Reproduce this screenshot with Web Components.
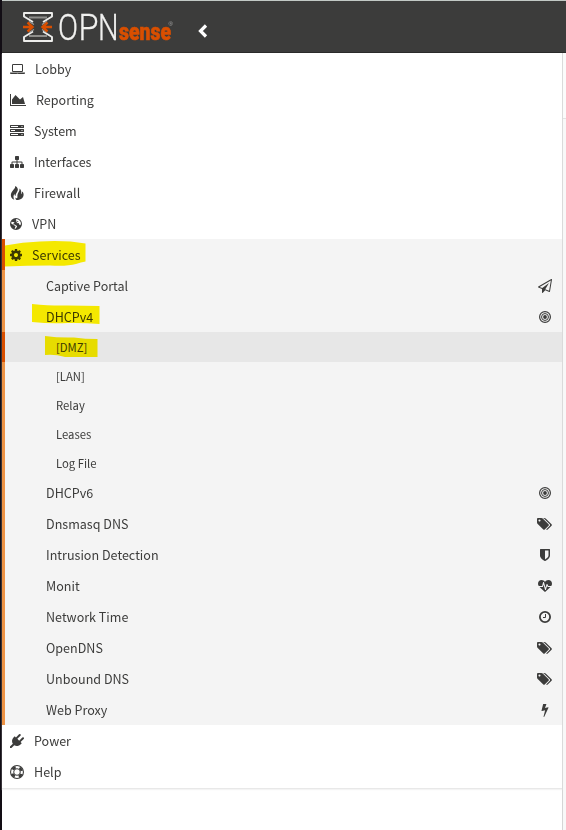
<!DOCTYPE html>
<html lang="en"><head><meta charset="utf-8"><title>OPNsense</title>
<style>
html,body{margin:0;height:100%;overflow:hidden}
body{background:#fff;font-family:"Noto Sans CJK SC","Noto Sans",sans-serif;color:#3c3c3b}
</style></head><body>
<opn-app></opn-app>
<script>
const P=(w,d)=>`<svg viewBox="0 0 ${w} 1792"><path d="${d}"/></svg>`;
const ICONS={
laptop:P(1920,"M416 1280q-66 0-113-47t-47-113v-704q0-66 47-113t113-47h1088q66 0 113 47t47 113v704q0 66-47 113t-113 47h-1088zm-32-864v704q0 13 9.500 22.500t22.500 9.500h1088q13 0 22.500-9.500t9.500-22.500v-704q0-13-9.500-22.500t-22.500-9.500h-1088q-13 0-22.500 9.500t-9.500 22.500zm1376 928h160v96q0 40-47 68t-113 28h-1600q-66 0-113-28t-47-68v-96h1760zm-720 96q16 0 16-16t-16-16h-160q-16 0-16 16t16 16h160z"),
chart:P(2048,"M2048 1536v128h-2048v-1536h128v1408h1920zM1664 512l256 896h-1664v-576l448-576 576 576z"),
server:`<svg viewBox="0 0 14 14"><path fill-rule="evenodd" d="M.5 1h13q.5 0 .5.5v2q0 .5-.5.5H.5Q0 4 0 3.500v-2Q0 1 .5 1zM1 2v1h7V2zM11.500 2v1h1V2zM.5 5h13q.5 0 .5.5v2q0 .5-.5.5H.5Q0 8 0 7.500v-2Q0 5 .5 5zM1 6v1h4V6zM11.500 6v1h1V6zM.5 9h13q.5 0 .5.500v2q0 .5-.5.5H.5Q0 12 0 11.500v-2Q0 9 .5 9zM1 10v1h7v-1zM11.500 10v1h1v-1z"/></svg>`,
sitemap:P(1792,"M1792 1248v320q0 40-28 68t-68 28h-320q-40 0-68-28t-28-68v-320q0-40 28-68t68-28h96v-192h-512v192h96q40 0 68 28t28 68v320q0 40-28 68t-68 28h-320q-40 0-68-28t-28-68v-320q0-40 28-68t68-28h96v-192h-512v192h96q40 0 68 28t28 68v320q0 40-28 68t-68 28h-320q-40 0-68-28t-28-68v-320q0-40 28-68t68-28h96v-192q0-52 38-90t90-38h512v-192h-96q-40 0-68-28t-28-68v-320q0-40 28-68t68-28h320q40 0 68 28t28 68v320q0 40-28 68t-68 28h-96v192h512q52 0 90 38t38 90v192h96q40 0 68 28t28 68z"),
fire:`<svg viewBox="0 0 14 14"><path d="M5 0C6 2.400 2.200 4.200 1.200 7.200.2 9.900 1.500 12.700 4.300 13.800 3.200 11.600 3.200 9.600 4.500 7.800c0 1.400.4 2 1 2.300C5.400 7 8.300 5.500 7.800 2.900 7.400 1.500 6.500.5 5 0zM9.400 2.400c.8 2.600-2 4.300-2 7.200 0 1.200.2 1.800-.2 2.400-.5.5-1.300.2-1.600-.6-.3 1.100.1 2 .9 2.600C10.400 14 13.500 12 13.600 8.700c.1-1.600-.6-2.700-1.700-3.300.3 1.200.1 2.100-.7 2.900.3-2.400.1-4.800-1.800-5.900z"/></svg>`,
globe:`<svg viewBox="0 0 12 12"><path fill-rule="evenodd" d="M6 0a6 6 0 1 1 0 12A6 6 0 0 1 6 0zM6.800 1.100 5.700 1.800l.8.5-.7.9 1 .5 1-.8.7.3-.8.8-1 .4.1.8 1.300-.3.7.4.4 1.200.8.600.7-.7.200.4A5 5 0 0 0 6.800 1.100zM1.500 3.800 1.200 5.200l.9 1.100 1.200.2.6.8 1.100.4.6.8-.6 1-.3 1.200.5.3 1.300-1.500.6-1-.3-.8-1.200-.4-.8-.8-1 .1-.6-.7.8-.8.500-.8z"/></svg>`,
gear:`<svg viewBox="128 128 1536 1536"><path d="M1152 896q0-106-75-181t-181-75-181 75-75 181 75 181 181 75 181-75 75-181zm512-109v222q0 12-8 23t-20 13l-185 28q-19 54-39 91 35 50 107 138 10 12 10 25t-9 23q-27 37-99 108t-94 71q-12 0-26-9l-138-108q-44 23-91 38-16 136-29 186-7 28-36 28h-222q-14 0-24.500-8.500t-11.500-21.500l-28-184q-49-16-90-37l-141 107q-10 9-25 9-14 0-25-11-126-114-165-168-7-10-7-23 0-12 8-23 15-21 51-66.500t54-70.500q-27-50-41-99l-183-27q-13-2-21-12.500t-8-23.500v-222q0-12 8-23t19-13l186-28q14-46 39-92-40-57-107-138-10-12-10-24 0-10 9-23 26-36 98.500-107.500t94.500-71.500q13 0 26 10l138 107q44-23 91-38 16-136 29-186 7-28 36-28h222q14 0 24.500 8.500t11.500 21.500l28 184q49 16 90 37l142-107q9-9 24-9 13 0 25 10 129 119 165 170 7 8 7 22 0 12-8 23-15 21-51 66.500t-54 70.500q26 50 41 98l183 28q13 2 21 12.500t8 23.500z"/></svg>`,
plane:P(1792,"M1764 11q33 24 27 64l-256 1536q-5 29-32 45-14 8-31 8-11 0-24-5l-527-215-298 327q-18 21-47 21-14 0-23-4-19-7-30-23.500t-11-36.500v-452l-472-193q-37-14-40-55-3-39 32-59l1664-960q35-21 68 2zm-342 1499l221-1323-1434 827 336 137 863-639-478 797z"),
bullseye:`<svg viewBox="0 0 12 12"><circle cx="6" cy="6" r="1.900"/><g fill="none" stroke="currentColor"><circle cx="6" cy="6" r="3.450" stroke-width="1"/><circle cx="6" cy="6" r="5.400" stroke-width="1.200"/></g></svg>`,
tags:`<svg viewBox="128 0 2048 1792"><path d="M576 448q0-53-37.500-90.500t-90.500-37.500-90.500 37.500-37.500 90.500 37.500 90.500 90.500 37.500 90.500-37.500 37.500-90.500zm1067 576q0 53-37 90l-491 492q-39 37-91 37-53 0-90-37l-715-716q-38-37-64.500-101t-26.500-117v-416q0-52 38-90t90-38h416q53 0 117 26.500t102 64.500l715 714q37 39 37 91zm384 0q0 53-37 90l-491 492q-39 37-91 37-36 0-59-14t-53-45l470-470q37-37 37-90 0-52-37-91l-715-714q-38-38-102-64.500t-117-26.500h224q53 0 117 26.500t102 64.500l715 714q37 39 37 91z"/></svg>`,
shield:P(1792,"M1344 960v-640h-448v1137q119-63 213-137 235-184 235-360zm192-768v768q0 86-33.500 170.500t-83 150-118 127.500-126.500 103-121 77.500-89.500 49.500-42.500 20q-12 6-26 6t-26-6q-16-7-42.500-20t-89.500-49.500-121-77.500-126.500-103-118-127.500-83-150-33.500-170.500v-768q0-26 19-45t45-19h1152q26 0 45 19t19 45z"),
heart:P(1792,"M1280 896h305q-5 6-10 10.500t-9 7.500l-3 4-623 600q-18 18-44 18t-44-18l-624-602q-5-2-21-20h369q22 0 39.500-13.500t22.500-34.500l70-281 190 667q6 20 23 33t39 13q21 0 38-13t23-33l146-485 56 112q18 35 57 35zm512-428q0 145-103 300h-369l-111-221q-8-17-25.500-27t-36.500-8q-45 5-56 46l-129 430-196-686q-6-20-23.500-33t-39.500-13-39 13.500-22 34.500l-116 464h-423q-103-155-103-300 0-220 127-344t351-124q62 0 126.500 21.500t120 58 95.500 68.500 76 68q36-36 76-68t95.500-68.500 120-58 126.500-21.500q224 0 351 124t127 344z").replace('0 0 1792','0 -128 1792'),
clock:`<svg viewBox="0 0 12 12" fill="none" stroke="currentColor"><circle cx="6" cy="6" r="5.100" stroke-width="1.800"/><path d="M6.500 3v3.500H4" stroke-width="1"/></svg>`,
bolt:P(1792,"M1333 566q18 20 7 44l-540 1157q-13 25-42 25-4 0-14-2-17-5-25.500-19t-4.500-30l197-808-406 101q-4 1-12 1-18 0-31-11-18-15-13-39l201-825q4-14 16-23t28-9h328q19 0 32 12.500t13 29.500q0 8-5 18l-171 463 396-98q8-2 12-2 19 0 34 15z"),
plug:P(1792,"M1755 453q37 38 37 90.500t-37 90.500l-401 400 150 150-160 160q-163 163-389.500 186.500t-411.500-100.500l-362 362h-181v-181l362-362q-124-185-100.500-411.500t186.500-389.500l160-160 150 150 400-401q38-37 91-37t90 37 37 90.500-37 90.500l-400 401 234 234 401-400q38-37 91-37t90 37z"),
ring:`<svg viewBox="0 0 14 14" fill="none" stroke="currentColor"><circle cx="7" cy="7" r="6.450" stroke-width="1.100"/><circle cx="7" cy="7" r="3.300" stroke-width="1"/><circle cx="7" cy="7" r="4.900" stroke-width="2.600" stroke-dasharray="3.700 3.997" stroke-dashoffset="-2"/></svg>`
};
const define=(name,html)=>{
  const t=document.createElement('template');t.innerHTML=html;
  customElements.define(name,class extends HTMLElement{
    constructor(){super();this.attachShadow({mode:'open'}).append(t.content.cloneNode(true))}
  });
};
customElements.define('opn-icon',class extends HTMLElement{
  connectedCallback(){
    const r=this.shadowRoot||this.attachShadow({mode:'open'});
    r.innerHTML=`<style>:host{display:flex;align-items:center;justify-content:center;flex:none}svg{display:block;width:100%;height:100%;fill:currentColor}svg[fill=none]{fill:none}</style>${ICONS[this.getAttribute('name')]}`;
  }
});
customElements.define('opn-mark',class extends HTMLElement{
  connectedCallback(){
    const r=this.shadowRoot||this.attachShadow({mode:'open'});
    r.innerHTML=`<style>:host{position:absolute;inset:0;pointer-events:none;mix-blend-mode:multiply}svg{display:block;overflow:visible}</style><svg width="110" height="31"><path fill="#fff300" d="${this.getAttribute('shape')}"/></svg>`;
  }
});
/* icon and tail: name,width,height ; start: label offset from the row's inner edge */
customElements.define('opn-item',class extends HTMLElement{
  connectedCallback(){
    const a=n=>this.getAttribute(n),r=this.shadowRoot||this.attachShadow({mode:'open'});
    const ic=(v,cls)=>{if(!v)return'';const[n,w,h]=v.split(',');return`<span class="${cls}"><opn-icon name="${n}" style="width:${w}px;height:${h}px"></opn-icon></span>`};
    const sub=a('level')==='3';
    r.innerHTML=`<style>
:host{display:flex;align-items:flex-start;position:relative;box-sizing:border-box;height:${a('h')||31}px;background:${a('bg')||'transparent'};border-left:3px solid ${a('bar')||'transparent'}}
.lead{display:flex;align-items:center;flex:none;height:32px;width:${a('start')}px;padding-left:5px;box-sizing:border-box}
.label{flex:1;white-space:nowrap;line-height:${sub?(a('bg')?31:29):31}px;font-size:${sub?'var(--small)':'var(--normal)'}}
.tail{display:flex;align-items:center;justify-content:center;width:20px;height:32px;margin-right:7px}
</style><span class="lead">${ic(a('icon'),'')}</span><span class="label"><slot></slot></span>${ic(a('tail'),'tail')}${a('mark')?`<opn-mark shape="${a('mark')}"></opn-mark>`:''}`;
  }
});
define('opn-logo',`<style>:host{display:block}svg{display:block}</style>
<svg width="156" height="51" viewBox="20 1 156 51">
<path fill="none" stroke="#8e8e8b" stroke-width="1.800" d="M29 17.500h18M29 36h18"/>
<g fill="none" stroke="#ededeb" stroke-width="1.900" stroke-linejoin="round"><path d="M33 22 24 16.500V13h28v3.500L43 22M33 31.500 24 37v4h28v-4l-9-5.500"/></g>
<g fill="none" stroke="#9a9a97" stroke-width="1.300"><path d="M29 21.500l5 3M47 21.500l-5 3M29 32.500l5-3M47 32.500l-5-3"/></g>
<g fill="none" stroke="#d94f00" stroke-width="2.400"><path d="M23 27h9m-4.500-4.500 5 4.500-5 4.500M52 27h-9m4.500-4.500-5 4.500 5 4.500"/></g>
<text y="40" font-family="Roboto" font-weight="300" font-size="36" fill="#f1f1ef" stroke="#f1f1ef" stroke-width=".3"><tspan x="58" textLength="20" lengthAdjust="spacingAndGlyphs">O</tspan><tspan x="78.500" textLength="20" lengthAdjust="spacingAndGlyphs">P</tspan><tspan x="98" textLength="20.500" lengthAdjust="spacingAndGlyphs">N</tspan></text>
<text x="119" y="39.500" font-family="Roboto" font-weight="900" font-size="24" fill="#d94f00" stroke="#d94f00" stroke-width=".6" textLength="52" lengthAdjust="spacingAndGlyphs">sense</text>
<text x="168.500" y="26" font-family="Liberation Sans" font-size="6" fill="#aaa">®</text></svg>`);
define('opn-header',`<style>:host{display:flex;align-items:center;box-sizing:border-box;height:53px;background:#3c3c3b;border-top:1px solid #c2c9c5;border-bottom:1px solid #2b2b2a;padding-left:18px;gap:22px}.chevron{display:block;margin-top:8px}</style>
<opn-logo></opn-logo><svg class="chevron" width="10" height="14" fill="none" stroke="#fff" stroke-width="3.200"><path d="M8 1.500 2.500 7 8 12.500"/></svg>`);
define('opn-menu',`<style>:host{display:block;width:560px;height:735px;border-bottom:1px solid #e8e8e8;box-shadow:0 1px 1px #f4f4f4}.open{display:block;background:#f4f4f4}</style>
<opn-item icon="laptop,15,14" start="30">Lobby</opn-item>
<opn-item icon="chart,16,14" start="31">Reporting</opn-item>
<opn-item icon="server,14,14" start="29">System</opn-item>
<opn-item icon="sitemap,14,14" start="29">Interfaces</opn-item>
<opn-item icon="fire,14,14" start="29">Firewall</opn-item>
<opn-item icon="globe,12,12" start="27">VPN</opn-item>
<div class="open">
<opn-item icon="gear,12,12" start="27" bar="#d94f00" mark="M0 6.500Q18 3 35 2.500Q60 1 80.500 4.500V22.500Q76 23 71 25Q62 27.500 45 26.500Q22 26.500 0 27.500Z">Services</opn-item>
<opn-item start="41" bar="#ed9345" tail="plane,14,14">Captive Portal</opn-item>
<opn-item start="41" bar="#ed9345" tail="bullseye,12,12" mark="M27 3Q47 5 62 4.500L94.500 5V23Q77 21.500 63 22Q46 23 27 21Z">DHCPv4</opn-item>
<opn-item level="3" h="30" start="51" bar="#d94f00" bg="#e7e7e7" mark="M40 4Q54 6 69 5.500Q80 7 92.500 7V25H60Q50 22 40 23Z">[DMZ]</opn-item>
<opn-item level="3" h="29" start="51" bar="#ed9345">[LAN]</opn-item>
<opn-item level="3" h="29" start="51" bar="#ed9345">Relay</opn-item>
<opn-item level="3" h="29" start="51" bar="#ed9345">Leases</opn-item>
<opn-item level="3" h="28" start="51" bar="#ed9345">Log File</opn-item>
<opn-item start="41" bar="#ed9345" tail="bullseye,12,12">DHCPv6</opn-item>
<opn-item start="41" bar="#ed9345" tail="tags,16,14">Dnsmasq DNS</opn-item>
<opn-item start="41" bar="#ed9345" tail="shield,14,14">Intrusion Detection</opn-item>
<opn-item start="41" bar="#ed9345" tail="heart,14,14">Monit</opn-item>
<opn-item start="41" bar="#ed9345" tail="clock,12,12">Network Time</opn-item>
<opn-item start="41" bar="#ed9345" tail="tags,16,14">OpenDNS</opn-item>
<opn-item start="41" bar="#ed9345" tail="tags,16,14">Unbound DNS</opn-item>
<opn-item start="41" bar="#ed9345" tail="bolt,14,14">Web Proxy</opn-item>
</div>
<opn-item icon="plug,14,14" start="29">Power</opn-item>
<opn-item icon="ring,14,14" start="29">Help</opn-item>`);
define('opn-app',`<style>:host{display:block;height:830px;box-sizing:border-box;border-left:2px solid #120d14;--normal:12.550px;--small:11.300px}
.body{display:flex;height:777px}.side{flex:none;width:560px;border-right:1px solid #d5d5d5}.page{flex:1;background:#f8f8f8}.top{height:65px;background:#fbfbfb;border-bottom:1px solid #e2e2e2}</style>
<opn-header></opn-header><div class="body"><div class="side"><opn-menu></opn-menu></div><div class="page"><div class="top"></div></div></div>`);
</script></body></html>
